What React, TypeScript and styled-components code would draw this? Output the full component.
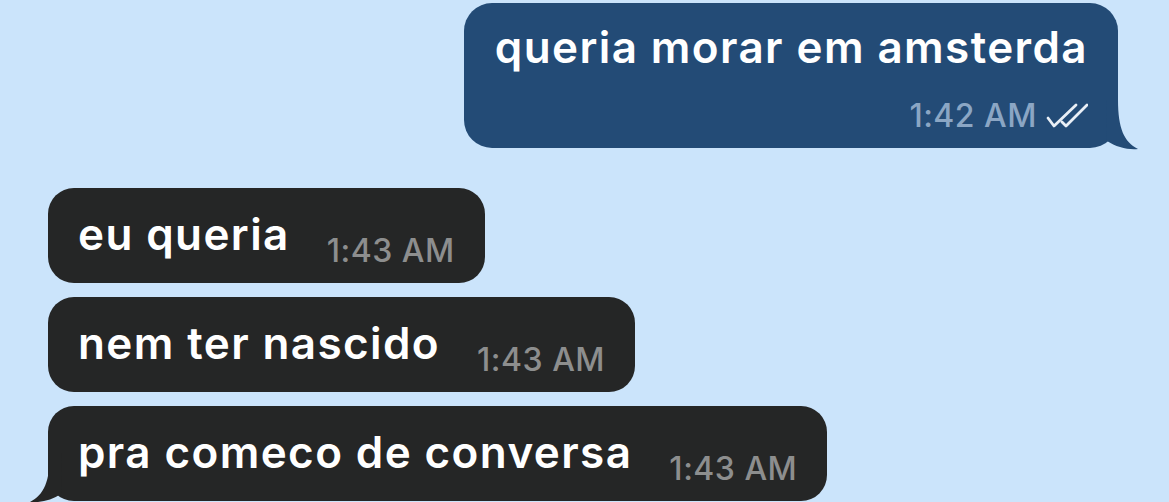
import React from "react";
import styled, { createGlobalStyle } from "styled-components";

const Global = createGlobalStyle`
  html, body {
    margin: 0;
    padding: 0;
    background: #cbe4fb;
  }
  body {
    font-family: Inter, "Noto Sans", "Liberation Sans", sans-serif;
    -webkit-font-smoothing: antialiased;
  }
`;

const Chat = styled.div`
  width: 1169px;
  height: 502px;
  overflow: hidden;
  display: flex;
  flex-direction: column;
  padding-top: 3px;
  box-sizing: border-box;
`;

const OutRow = styled.div`
  display: flex;
  justify-content: flex-end;
  padding-right: 51px;
`;

const InColumn = styled.div`
  display: flex;
  flex-direction: column;
  align-items: flex-start;
  gap: 14px;
  padding-left: 48px;
  margin-top: 40px;
`;

const OutBubble = styled.div`
  position: relative;
  background: #234b76;
  border-radius: 28px;
  height: 145px;
  box-sizing: border-box;
  padding: 19px 30px 0 31px;
  display: flex;
  flex-direction: column;
  align-items: flex-end;
`;

const InBubble = styled.div`
  position: relative;
  background: #252626;
  border-radius: 26px;
  height: 95px;
  box-sizing: border-box;
  padding: 0 30px 14px 30px;
  display: flex;
  align-items: flex-end;
  gap: 37px;
`;

const Text = styled.div<{ $in?: boolean }>`
  color: #ffffff;
  font-size: 44px;
  font-weight: 600;
  line-height: 50px;
  letter-spacing: 1.4px;
  white-space: nowrap;
  align-self: ${(p) => (p.$in ? "flex-start" : "auto")};
  margin-top: ${(p) => (p.$in ? "21px" : "0")};
`;

const Meta = styled.div`
  display: flex;
  align-items: center;
  gap: 9px;
  margin-top: 26px;
`;

const Time = styled.span<{ $out?: boolean }>`
  color: ${(p) => (p.$out ? "#8ba6c4" : "#8d8e8e")};
  font-size: 32px;
  font-weight: 500;
  line-height: 36px;
  letter-spacing: 0.5px;
  white-space: nowrap;
`;

const Tail = styled.svg<{ $side: "left" | "right" }>`
  position: absolute;
  bottom: -2px;
  width: 32px;
  height: 50px;
  ${(p) => (p.$side === "right" ? "right: -20px;" : "left: -18px;")}
`;

const Checks = () => (
  <svg width="42" height="26" viewBox="0 0 42 26" fill="none">
    <path
      d="M2 15 L8 23 L30 2"
      stroke="#e9eff6"
      strokeWidth="2.8"
      strokeLinecap="round"
      strokeLinejoin="round"
    />
    <path
      d="M16 19 L20 23 L41 2"
      stroke="#e9eff6"
      strokeWidth="2.8"
      strokeLinecap="round"
      strokeLinejoin="round"
    />
  </svg>
);

const OutTail = () => (
  <Tail $side="right" viewBox="0 0 32 50">
    <path d="M0 0 L12 0 C12 28 18 42 32 49 C22 50 10 47 1 41 Z" fill="#234b76" />
  </Tail>
);

const InTail = () => (
  <Tail $side="left" viewBox="0 0 32 50">
    <path d="M32 0 L20 0 C20 28 14 42 0 49 C10 50 22 47 31 41 Z" fill="#252626" />
  </Tail>
);

const incoming = [
  { text: "eu queria", time: "1:43 AM" },
  { text: "nem ter nascido", time: "1:43 AM" },
  { text: "pra comeco de conversa", time: "1:43 AM", tail: true },
];

export default function App() {
  return (
    <>
      <Global />
      <Chat>
        <OutRow>
          <OutBubble>
            <Text>queria morar em amsterda</Text>
            <Meta>
              <Time $out>1:42 AM</Time>
              <Checks />
            </Meta>
            <OutTail />
          </OutBubble>
        </OutRow>
        <InColumn>
          {incoming.map((m, i) => (
            <InBubble key={i}>
              <Text $in>{m.text}</Text>
              <Time>{m.time}</Time>
              {m.tail && <InTail />}
            </InBubble>
          ))}
        </InColumn>
      </Chat>
    </>
  );
}
